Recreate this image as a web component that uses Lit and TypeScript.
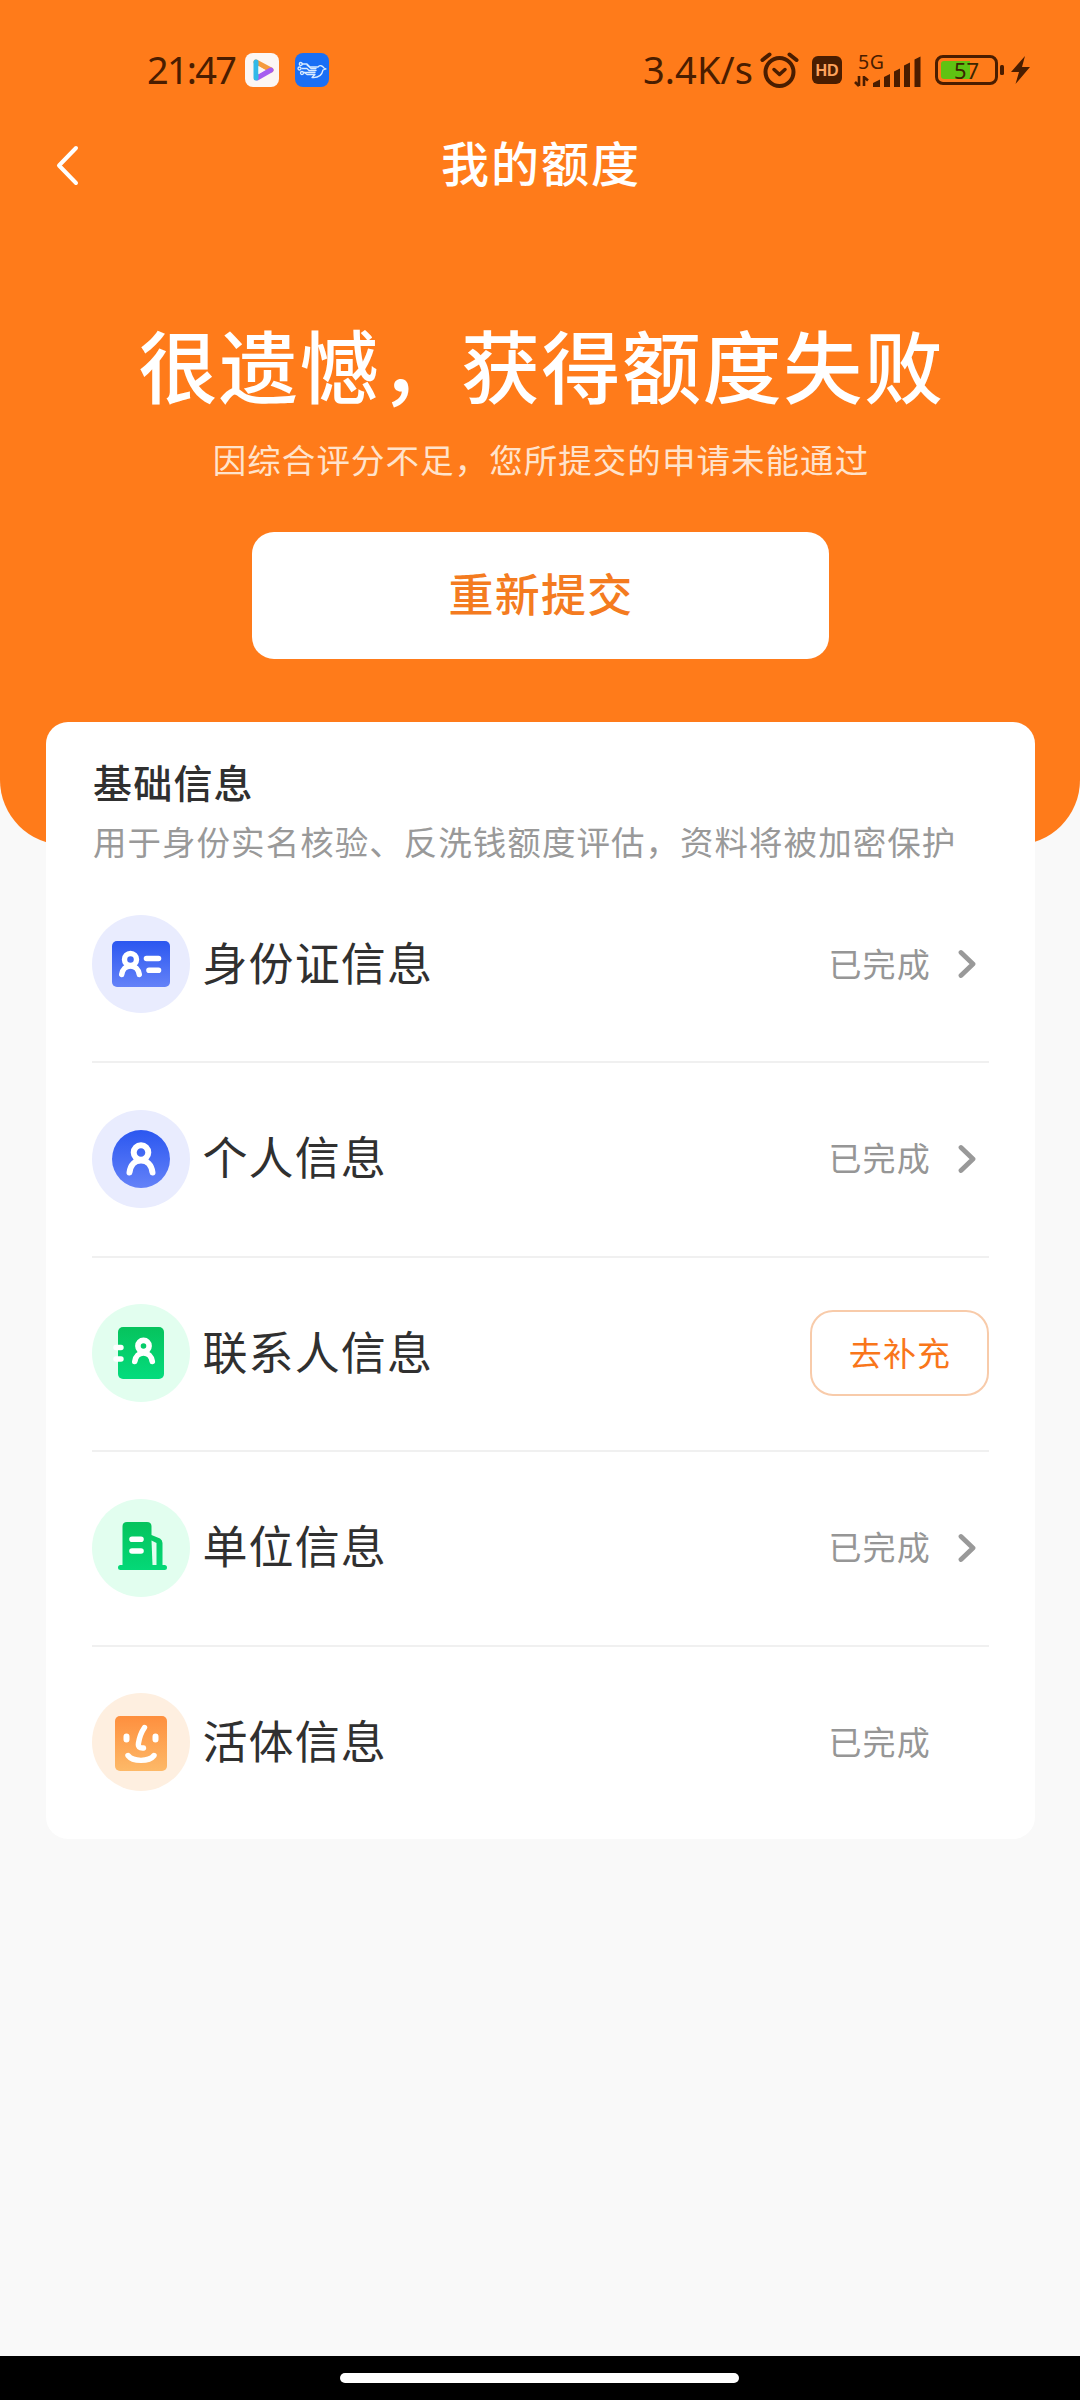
import { LitElement, html, css, svg, nothing } from "lit";
import { customElement, property } from "lit/decorators.js";

const FONT = css`"Noto Sans CJK SC", sans-serif`;

const person = svg`<circle cx="0" cy="-8" r="7.3"/><path d="M-11.5 12C-10.5 4-6 0-0 0S10.500 4 11.500 12"/>`;

const icons: Record<string, unknown> = {
  idcard: svg`
    <defs><linearGradient id="g" x1="0" y1="0" x2="0" y2="1"><stop offset="0" stop-color="#2b57f0"/><stop offset="1" stop-color="#6482f8"/></linearGradient></defs>
    <circle cx="49" cy="49" r="49" fill="#e9ecfe"/>
    <rect x="20" y="26" width="58" height="46" rx="5" fill="url(#g)"/>
    <g fill="none" stroke="#fff" stroke-width="5.400" stroke-linecap="round">
      <circle cx="38.500" cy="44.500" r="6"/><path d="M29.700 59.500C30.500 54 34 51 38.500 51S46.500 54 47.300 59.500"/>
      <path d="M54.500 43.500H66.500M57 55.300H66.500" stroke-width="5.600"/>
    </g>`,
  person: svg`
    <defs><linearGradient id="g" x1="0" y1="0" x2="0" y2="1"><stop offset="0" stop-color="#2b57f0"/><stop offset="1" stop-color="#6482f8"/></linearGradient></defs>
    <circle cx="49" cy="49" r="49" fill="#e9ecfe"/>
    <circle cx="49" cy="49" r="29" fill="url(#g)"/>
    <g transform="translate(49 50.500)" fill="none" stroke="#fff" stroke-width="6" stroke-linecap="round">${person}</g>`,
  contact: svg`
    <defs><linearGradient id="g" x1="0" y1="0" x2="0" y2="1"><stop offset="0" stop-color="#06c35d"/><stop offset="1" stop-color="#04dc7d"/></linearGradient></defs>
    <circle cx="49" cy="49" r="49" fill="#e2feef"/>
    <rect x="26" y="23" width="46" height="52" rx="5" fill="url(#g)"/>
    <g fill="none" stroke="#fff" stroke-linecap="round">
      <path d="M24 43.500H29M24 55H29" stroke-width="5.400"/>
      <g stroke-width="5.600"><circle cx="51.500" cy="42" r="5.600"/><path d="M42.800 57.500C43.500 52 47 49 51.500 49S59.500 52 60.300 57.500"/></g>
    </g>`,
  building: svg`
    <defs><linearGradient id="g" gradientUnits="userSpaceOnUse" x1="0" y1="23" x2="0" y2="71"><stop offset="0" stop-color="#06c35d"/><stop offset="1" stop-color="#04d877"/></linearGradient></defs>
    <circle cx="49" cy="49" r="49" fill="#e2feef"/>
    <path d="M35 23H55Q59.500 23 59.500 27.500V36L68 39.500Q70.500 41 70.500 44V66H72.500A2.500 2.500 0 0 1 72.500 71H28.500A2.500 2.500 0 0 1 28.500 66H30.500V27.500Q30.500 23 35 23Z" fill="url(#g)"/>
    <path d="M59.500 41.500L64.500 44V66H60.500Z" fill="#e2feef"/>
    <path d="M40 40.300H49M40 52H49" fill="none" stroke="#fff" stroke-width="5.600" stroke-linecap="round"/>`,
  face: svg`
    <defs><linearGradient id="g" x1="0" y1="0" x2="0" y2="1"><stop offset="0" stop-color="#fe8f3e"/><stop offset="1" stop-color="#fdb968"/></linearGradient></defs>
    <circle cx="49" cy="49" r="49" fill="#feefe0"/>
    <rect x="23" y="23" width="52" height="55" rx="5" fill="url(#g)"/>
    <g fill="none" stroke="#fff" stroke-linecap="round" stroke-linejoin="round">
      <path d="M34.500 43.500V46.500M63.500 43.500V46.500" stroke-width="6"/>
      <path d="M52.500 34.500Q48 41 46.500 50Q45.500 55.500 51.500 55" stroke-width="5.400"/>
      <path d="M36 62.500C41 69 57 69 62 62.500" stroke-width="5.400"/>
    </g>`,
};

@customElement("status-bar")
class StatusBar extends LitElement {
  static styles = css`
    :host { display: flex; height: 140px; box-sizing: border-box; padding: 42px 48px 42px 147px; align-items: center; color: #4a1d00; font-family: "Noto Sans", sans-serif; }
    .time { width: 98px; padding-bottom: 2px; font-size: 38px; line-height: 54px; letter-spacing: -1.8px; white-space: nowrap; }
    .speed { padding-bottom: 2px; font-size: 38px; line-height: 54px; letter-spacing: 0.1px; width: 117px; white-space: nowrap; }
    svg { display: block; flex: none; overflow: visible; }
    .app + .app { margin-left: 16px; }
    .spacer { flex: 1; }
    .system { display: flex; align-items: center; }
    .hd { width: 30px; height: 28px; margin-left: 13px; border-radius: 6px; background: #4a1d00; color: #ffa35c; font: 700 16px/29px "Liberation Sans", sans-serif; text-align: center; }
    .signal { margin-left: 12px; }
    .battery { box-sizing: border-box; width: 63px; height: 30px; margin-left: 13px; border: 3px solid #4a1d00; border-radius: 8px; padding: 3px; display: flex; }
    .level { width: 51px; border-radius: 3px; background: linear-gradient(90deg, #5fc312 57%, transparent 57%); text-align: center; font-size: 22px; line-height: 18px; color: #3c2500; }
    .bolt { margin-left: 2px; }
  `;
  render() {
    return html`
      <div class="time">21:47</div>
      <svg class="app" width="34" height="34" viewBox="0 0 34 34">
        <rect width="34" height="34" rx="8" fill="#fcf6f4"/>
        <path d="M11 9L26 17" stroke="#f59a3e" stroke-width="5" stroke-linecap="round"/>
        <path d="M26 17L12 25" stroke="#a65cf0" stroke-width="5" stroke-linecap="round"/>
        <path d="M11 9V25" stroke="#31b9e8" stroke-width="5" stroke-linecap="round"/>
        <path d="M13.500 13L20 17L13.500 21Z" fill="#fcf6f4"/>
      </svg>
      <svg class="app" width="34" height="34" viewBox="0 0 34 34">
        <rect width="34" height="34" rx="8" fill="#1a6ff5"/>
        <g fill="none" stroke="#d9ecff" stroke-width="1.300" stroke-linejoin="round" stroke-linecap="round">
          <path d="M7 11H12L15 14H23Q26 11 29 15L31 16L28 17C27 22 23 25 17 24.500L20 21.500H12L9.500 19.500"/>
          <path d="M7 15.500H12L14 17.500H21M9 19.500H20M12 12L16 15.500H21"/>
          <circle cx="5.800" cy="11" r="1.500"/><circle cx="4.500" cy="15.500" r="1.500"/><circle cx="7" cy="20" r="1.500"/>
        </g>
      </svg>
      <div class="spacer"></div>
      <div class="system">
        <div class="speed">3.4K/s</div>
        <svg width="39" height="36" viewBox="0 0 39 36" fill="none" stroke="#4a1d00" stroke-linecap="round">
          <circle cx="19.500" cy="20" r="14" stroke-width="4"/>
          <path d="M2.500 8L9.500 2.500M36.500 8L29.500 2.500" stroke-width="4"/>
          <path d="M14 17.500L19.500 22.500L25 17.500" stroke-width="3.500" stroke-linejoin="round"/>
        </svg>
        <div class="hd">HD</div>
        <svg class="signal" width="68" height="36" viewBox="0 0 68 36" fill="#4a1d00">
          <text x="4" y="16.500" font-family="Noto Sans, sans-serif" font-size="19.500" textLength="26">5G</text>
          <path d="M19 35V31L26 27.500V35Z"/><path d="M30 35V25L36 22V35Z"/><path d="M40 35V19.500L46 16.500V35Z"/><path d="M50 35V13.500L56 10.500V35Z"/><path d="M60.500 35V7.500L66.500 4.500V35Z"/>
          <path d="M5 24V34M1 30L5 34M10 34V24M10 25L14 28.500" fill="none" stroke="#4a1d00" stroke-width="2.600"/>
        </svg>
        <div class="battery"><div class="level">57</div></div>
        <svg class="bolt" width="32" height="30" viewBox="0 0 32 30" fill="#4a1d00">
          <rect x="0" y="10" width="4" height="10" rx="1.500"/>
          <path d="M25 1L11 17H19L15.500 29L30 12H22Z"/>
        </svg>
      </div>`;
  }
}

@customElement("info-row")
class InfoRow extends LitElement {
  @property() icon = "";
  @property() label = "";
  @property() status = "";
  @property({ type: Boolean }) arrow = false;
  @property() action = "";
  static styles = css`
    :host { display: flex; align-items: center; box-sizing: border-box; height: 194.500px; font-family: ${FONT}; }
    .icon { display: block; flex: none; width: 98px; height: 98px; }
    .label { margin-left: 12.500px; padding-bottom: 5px; font-size: 45px; letter-spacing: 1.100px; line-height: 60px; color: #303030; flex: 1; }
    .status { padding-bottom: 3px; font-size: 33px; letter-spacing: 1.200px; line-height: 48px; color: #969696; }
    .slot { width: 58px; display: flex; box-sizing: border-box; padding-left: 27px; }
    .action { box-sizing: border-box; width: 179px; height: 86px; border: 2px solid #f8cbaa; border-radius: 23px; background: #fff; padding: 0 0 3px 1px; font: 400 33px/76px ${FONT}; letter-spacing: 1.200px; color: #f9761a; text-align: center; }
  `;
  render() {
    return html`
      <svg class="icon" viewBox="0 0 98 98">${icons[this.icon]}</svg>
      <div class="label">${this.label}</div>
      ${this.action
        ? html`<button class="action">${this.action}</button>`
        : html`<div class="status">${this.status}</div>
            <div class="slot">${this.arrow
              ? html`<svg width="19" height="30" viewBox="0 0 19 30" fill="none" stroke="#999" stroke-width="4.800" stroke-linecap="round" stroke-linejoin="round"><path d="M3 3.500L15 15L3 26.500"/></svg>`
              : nothing}</div>`}`;
  }
}

@customElement("app-root")
class AppRoot extends LitElement {
  static styles = css`
    :host { display: flex; flex-direction: column; width: 1080px; height: 2400px; background: #f9f9f9; font-family: ${FONT}; overflow: hidden; }
    .hero { height: 845px; flex: none; box-sizing: border-box; background: #ff7b1a; border-radius: 0 0 65px 65px; color: #fff; }
    .nav { display: grid; grid-template-columns: 100px 1fr 100px; height: 50px; align-items: center; }
    .back { display: block; margin-left: 54px; }
    .title { padding: 0 0 8px 2px; text-align: center; font-size: 48px; font-weight: 500; line-height: 42px; letter-spacing: 2px; }
    .headline { margin: 118px 0 0; padding-left: 3px; text-align: center; font-size: 79px; font-weight: 500; line-height: 112px; letter-spacing: 1.600px; white-space: nowrap; }
    .reason { margin: 14px 0 0; padding-left: 2px; text-align: center; font-size: 33.500px; line-height: 50px; letter-spacing: 1.050px; color: #ffe3cc; white-space: nowrap; }
    .resubmit { display: block; width: 577px; height: 127px; margin: 48px auto 0; padding: 0 0 6px 2px; border: 0; border-radius: 22px; background: #fff; color: #f47b20; font: 500 45px/60px ${FONT}; letter-spacing: 1.300px; }
    .card { flex: none; box-sizing: border-box; width: 989px; height: 1117px; margin: -123px 0 0 46px; padding: 34px 46px 0; border-radius: 22px; background: #fff; }
    .heading { margin: 0; padding-left: 1px; font-size: 39px; font-weight: 500; line-height: 50px; letter-spacing: 1.200px; color: #303030; }
    .note { margin: 10px 0 0; padding-left: 1px; font-size: 33.500px; line-height: 50px; letter-spacing: 1.030px; color: #999; white-space: nowrap; }
    .rows { display: flex; flex-direction: column; padding-top: 0.750px; }
    info-row + info-row { background: linear-gradient(#f0f0f0, #f0f0f0) top / 100% 2px no-repeat; }
    .system-nav { margin-top: auto; height: 44px; box-sizing: border-box; padding-right: 2px; background: #000; display: flex; justify-content: center; align-items: center; flex: none; }
    .handle { width: 399px; height: 10px; border-radius: 5px; background: #fff; }
  `;
  render() {
    return html`
      <header class="hero">
        <status-bar></status-bar>
        <div class="nav">
          <svg class="back" width="26" height="44" viewBox="0 0 26 44" fill="none" stroke="#fff" stroke-width="4" stroke-linecap="round" stroke-linejoin="round"><path d="M22 5L5 22.500L22 40"/></svg>
          <div class="title">我的额度</div>
        </div>
        <h1 class="headline">很遗憾，获得额度失败</h1>
        <p class="reason">因综合评分不足，您所提交的申请未能通过</p>
        <button class="resubmit">重新提交</button>
      </header>
      <section class="card">
        <h2 class="heading">基础信息</h2>
        <p class="note">用于身份实名核验、反洗钱额度评估，资料将被加密保护</p>
        <div class="rows">
          <info-row icon="idcard" label="身份证信息" status="已完成" arrow></info-row>
          <info-row icon="person" label="个人信息" status="已完成" arrow></info-row>
          <info-row icon="contact" label="联系人信息" action="去补充"></info-row>
          <info-row icon="building" label="单位信息" status="已完成" arrow></info-row>
          <info-row icon="face" label="活体信息" status="已完成"></info-row>
        </div>
      </section>
      <footer class="system-nav"><div class="handle"></div></footer>`;
  }
}
